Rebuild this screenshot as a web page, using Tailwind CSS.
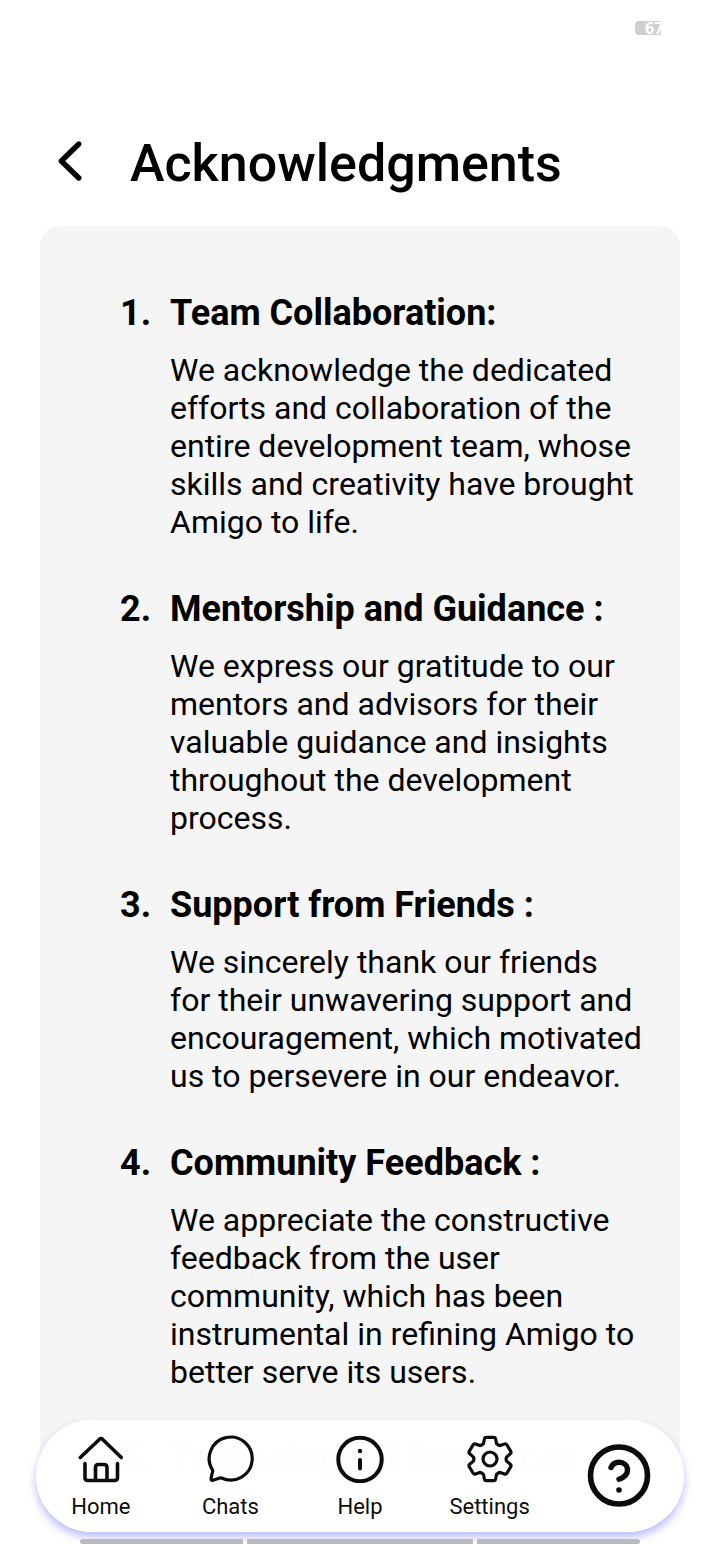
<!DOCTYPE html>
<html lang="en">
<head>
<meta charset="utf-8">
<meta name="viewport" content="width=device-width, initial-scale=1">
<title>Acknowledgments</title>
<script src="https://cdn.jsdelivr.net/npm/@tailwindcss/browser@4"></script>
</head>
<body class="bg-white text-black font-['Roboto',sans-serif]">
<div class="relative flex h-screen flex-col overflow-hidden px-10">
  <!-- Status bar -->
  <div class="flex h-14 shrink-0 items-center justify-end pr-[19px]">
    <div class="h-3.5 w-[26px] overflow-hidden rounded-l bg-[#d0d0d0] pl-2.5 font-['Noto_Sans'] text-[16px] leading-[14px] font-bold whitespace-nowrap text-white">67</div>
  </div>

  <header class="mt-[76px] flex h-16 shrink-0 items-center gap-10 pl-2.5">
    <button type="button" aria-label="Back" class="size-10">
      <svg class="size-10 overflow-visible" viewBox="0 0 40 40" fill="none" stroke="#060606" stroke-width="5.400" stroke-linecap="round" stroke-linejoin="round"><path d="M28.800 0L11.300 17L28.800 34"/></svg>
    </button>
    <h1 class="text-[52px] leading-[64px] font-medium">Acknowledgments</h1>
  </header>

  <main class="mt-[30px] mb-14 grow overflow-hidden rounded-t-[20px] bg-[#f5f5f5] pt-[66px] pr-9 pl-20">
    <ol class="flex flex-col gap-[47px] text-[32px] leading-[38px]">
      <li class="grid grid-cols-[50px_1fr] gap-y-[17px]">
        <span class="text-[36px] leading-[42px] font-bold">1.</span>
        <h2 class="text-[36px] leading-[42px] font-bold">Team Collaboration:</h2>
        <p class="col-start-2">We acknowledge the dedicated efforts and collaboration of the entire development team, whose skills and creativity have brought Amigo to life.</p>
      </li>
      <li class="grid grid-cols-[50px_1fr] gap-y-[17px]">
        <span class="text-[36px] leading-[42px] font-bold">2.</span>
        <h2 class="text-[36px] leading-[42px] font-bold">Mentorship and Guidance :</h2>
        <p class="col-start-2">We express our gratitude to our mentors and advisors for their valuable guidance and insights throughout the development process.</p>
      </li>
      <li class="grid grid-cols-[50px_1fr] gap-y-[17px]">
        <span class="text-[36px] leading-[42px] font-bold">3.</span>
        <h2 class="text-[36px] leading-[42px] font-bold">Support from Friends :</h2>
        <p class="col-start-2">We sincerely thank our friends for their unwavering support and encouragement, which motivated us to persevere in our endeavor.</p>
      </li>
      <li class="grid grid-cols-[50px_1fr] gap-y-[17px]">
        <span class="text-[36px] leading-[42px] font-bold">4.</span>
        <h2 class="text-[36px] leading-[42px] font-bold">Community Feedback :</h2>
        <p class="col-start-2">We appreciate the constructive feedback from the user community, which has been instrumental in refining Amigo to better serve its users.</p>
      </li>
      <li class="grid grid-cols-[50px_1fr] gap-y-[17px]">
        <span class="text-[36px] leading-[42px] font-bold">5.</span>
        <h2 class="text-[36px] leading-[42px] font-bold">Technological Resources</h2>
      </li>
    </ol>
  </main>

  <!-- Floating navigation over the scrolled content -->
  <div class="absolute inset-x-0 bottom-0">
    <nav class="mx-9 grid h-28 grid-cols-5 rounded-full bg-white/[0.994] text-[22px] leading-[26px] text-[#0c0c0c] shadow-[0_5px_9px_rgba(90,90,255,0.42)]">
      <a href="#home" class="flex flex-col items-center gap-[11px] pt-[15px]">
        <svg class="size-12" viewBox="0 0 48 48" fill="none" stroke="currentColor" stroke-width="3.600" stroke-linecap="round" stroke-linejoin="round"><path d="M3.300 22.500L22.800 4Q24 3 25.200 4L44.300 22.500M8 28.500V42.500Q8 45.500 11 45.500H37.500Q40.500 45.500 40.500 42.500V28.500M18.500 45V32.500Q18.500 29.500 21.500 29.500H27Q30 29.500 30 32.500V45"/></svg>
        <span>Home</span>
      </a>
      <a href="#chats" class="flex flex-col items-center gap-[11px] pt-[15px]">
        <svg class="size-12" viewBox="0 0 48 48" fill="none" stroke="currentColor" stroke-width="3.200" stroke-linecap="round" stroke-linejoin="round"><path d="M6.500 35A21.500 21.500 0 1 1 15.500 43C14 42.500 13 43.200 11.500 43.800L7 45.200Q4.800 45.800 5.100 43.600L6 38.800C6.500 37.200 7.200 36.500 6.500 35Z"/></svg>
        <span>Chats</span>
      </a>
      <a href="#help" class="flex flex-col items-center gap-[11px] pt-[15px]">
        <svg class="size-12" viewBox="0 0 48 48" fill="none" stroke="currentColor" stroke-width="4" stroke-linecap="round"><circle cx="24" cy="24.500" r="21.700"/><path d="M24 25V33.500"/><circle cx="24" cy="16" r="2.200" fill="currentColor" stroke="none"/></svg>
        <span>Help</span>
      </a>
      <a href="#settings" class="flex flex-col items-center gap-[11px] pt-[15px]">
        <svg class="size-12" viewBox="-24 -24 48 48" fill="none" stroke="currentColor" stroke-width="3.200" stroke-linecap="round" stroke-linejoin="round"><circle r="7"/><path d="M-6.500 -15.500L-5.600 -20Q-5.300 -21.700 -3.800 -21.700H3.800Q5.300 -21.700 5.600 -20L6.500 -15.500Q8.300 -13.700 10.200 -13.400L14.500 -14.900Q16.100 -15.500 17 -14L20.800 -7.600Q21.500 -6.200 20.300 -5.200L16.700 -2.100Q15.500 0 16.700 2.100L20.300 5.200Q21.500 6.200 20.800 7.600L17 14Q16.100 15.500 14.500 14.900L10.200 13.400Q8.300 13.700 6.500 15.500L5.600 20Q5.300 21.700 3.800 21.700H-3.800Q-5.300 21.700 -5.600 20L-6.500 15.500Q-8.300 13.700 -10.200 13.400L-14.500 14.900Q-16.100 15.500 -17 14L-20.800 7.600Q-21.500 6.200 -20.300 5.200L-16.700 2.100Q-15.500 0 -16.700 -2.100L-20.300 -5.200Q-21.500 -6.200 -20.800 -7.600L-17 -14Q-16.100 -15.500 -14.500 -14.900L-10.200 -13.400Q-8.300 -13.700 -6.500 -15.500Z"/></svg>
        <span>Settings</span>
      </a>
      <button type="button" aria-label="Support" class="flex items-center justify-center">
        <svg class="size-16" viewBox="0 0 64 64" fill="none" stroke="currentColor" stroke-width="5.600" stroke-linecap="round" stroke-linejoin="round"><circle cx="32" cy="31.500" r="28.500"/><path d="M24 23.500C25.500 19.500 28.500 18.200 32 18.200C37 18.200 40.500 21.500 40.500 26C40.500 31 37 33.500 32 35.200" stroke-width="5.400"/><circle cx="32" cy="46" r="2.800" fill="currentColor" stroke="none"/></svg>
      </button>
    </nav>
    <div class="relative mx-20 mt-[7px] grid grid-cols-[163px_1fr_163px] gap-1 overflow-hidden rounded-full">
      <span class="h-[5px] bg-[#b9b9c2]"></span><span class="h-[5px] bg-[#b9b9c2]"></span><span class="h-[5px] bg-[#b9b9c2]"></span>
    </div>
  </div>
</div>
</body>
</html>
